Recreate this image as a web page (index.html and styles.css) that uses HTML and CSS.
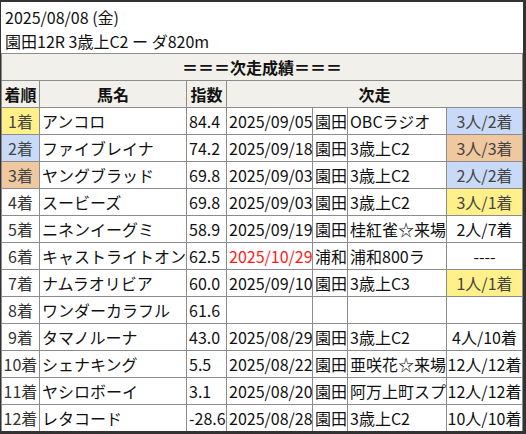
FILE: index.html
```html
<!DOCTYPE html>
<html lang="ja">
<head>
<meta charset="utf-8">
<link rel="stylesheet" href="styles.css">
</head>
<body>
<div class="frame">
  <div class="info">
    <div>2025/08/08 (金)</div>
    <div>園田12R 3歳上C2 ー ダ820m</div>
  </div>
  <table class="res">
    <colgroup>
      <col class="c1"><col class="c2"><col class="c3"><col class="c4"><col class="c5"><col class="c6"><col class="c7">
    </colgroup>
    <thead>
      <tr class="title"><th colspan="7">＝＝＝次走成績＝＝＝</th></tr>
      <tr class="head"><th>着順</th><th>馬名</th><th>指数</th><th colspan="4">次走</th></tr>
    </thead>
    <tbody>
      <tr><td class="rk y">1着</td><td>アンコロ</td><td>84.4</td><td>2025/09/05</td><td>園田</td><td>OBCラジオ</td><td class="nx b">3人/2着</td></tr>
      <tr><td class="rk b">2着</td><td>ファイブレイナ</td><td>74.2</td><td>2025/09/18</td><td>園田</td><td>3歳上C2</td><td class="nx o">3人/3着</td></tr>
      <tr><td class="rk o">3着</td><td>ヤングブラッド</td><td>69.8</td><td>2025/09/03</td><td>園田</td><td>3歳上C2</td><td class="nx b">2人/2着</td></tr>
      <tr><td class="rk">4着</td><td>スービーズ</td><td>69.8</td><td>2025/09/03</td><td>園田</td><td>3歳上C2</td><td class="nx y">3人/1着</td></tr>
      <tr><td class="rk">5着</td><td>ニネンイーグミ</td><td>58.9</td><td>2025/09/19</td><td>園田</td><td>桂紅雀☆来場</td><td class="nx">2人/7着</td></tr>
      <tr><td class="rk">6着</td><td>キャストライトオン</td><td>62.5</td><td class="red">2025/10/29</td><td>浦和</td><td>浦和800ラ</td><td class="nx">----</td></tr>
      <tr><td class="rk">7着</td><td>ナムラオリビア</td><td>60.0</td><td>2025/09/10</td><td>園田</td><td>3歳上C3</td><td class="nx y">1人/1着</td></tr>
      <tr><td class="rk">8着</td><td>ワンダーカラフル</td><td>61.6</td><td></td><td></td><td></td><td class="nx"></td></tr>
      <tr><td class="rk">9着</td><td>タマノルーナ</td><td>43.0</td><td>2025/08/29</td><td>園田</td><td>3歳上C2</td><td class="nx">4人/10着</td></tr>
      <tr><td class="rk">10着</td><td>シェナキング</td><td>5.5</td><td>2025/08/22</td><td>園田</td><td>亜咲花☆来場</td><td class="nx">12人/12着</td></tr>
      <tr><td class="rk">11着</td><td>ヤシロボーイ</td><td>3.1</td><td>2025/08/20</td><td>園田</td><td>阿万上町スプ</td><td class="nx">12人/12着</td></tr>
      <tr><td class="rk">12着</td><td>レタコード</td><td>-28.6</td><td>2025/08/28</td><td>園田</td><td>3歳上C2</td><td class="nx">10人/10着</td></tr>
    </tbody>
  </table>
</div>
</body>
</html>
```

FILE: styles.css
```css
html, body {
  margin: 0;
  padding: 0;
  background: #ffffff;
}
body {
  font-family: "Noto Sans CJK JP", "Noto Sans", sans-serif;
  font-size: 16px;
  color: #111111;
}
.frame {
  width: 526px;
  height: 434px;
  box-sizing: border-box;
  border-top: 2px solid #333333;
  border-left: 1px solid #333333;
  border-right: 3px solid #333333;
  border-bottom: 3px solid #333333;
  overflow: hidden;
  background: #ffffff;
}
.info {
  padding: 3px 0 0 4px;
  line-height: 24px;
}
.res {
  border-collapse: collapse;
  table-layout: fixed;
  width: 522px;
}
.c1 { width: 38px; }
.c2 { width: 147px; }
.c3 { width: 40px; }
.c4 { width: 86px; }
.c5 { width: 35px; }
.c6 { width: 99px; }
.c7 { width: 76px; }
.res th, .res td {
  border: 1px solid #8c8c8c;
  height: 26px;
  padding: 0 0 0 2px;
  line-height: 26px;
  white-space: nowrap;
  overflow: hidden;
  text-align: left;
  font-weight: normal;
}
.res th {
  background: #f2f0eb;
  text-align: center;
  font-weight: bold;
  padding: 0;
}
.res td.rk {
  text-align: center;
  padding: 0;
  color: #333333;
}
.res td.nx {
  text-align: center;
  padding: 0;
}
.res td.y { background: #fff08a; color: #444444; }
.res td.b { background: #c9daf8; color: #444444; }
.res td.o { background: #efc8a0; color: #444444; }
.res td.red { color: #ff1a1a; }
```
